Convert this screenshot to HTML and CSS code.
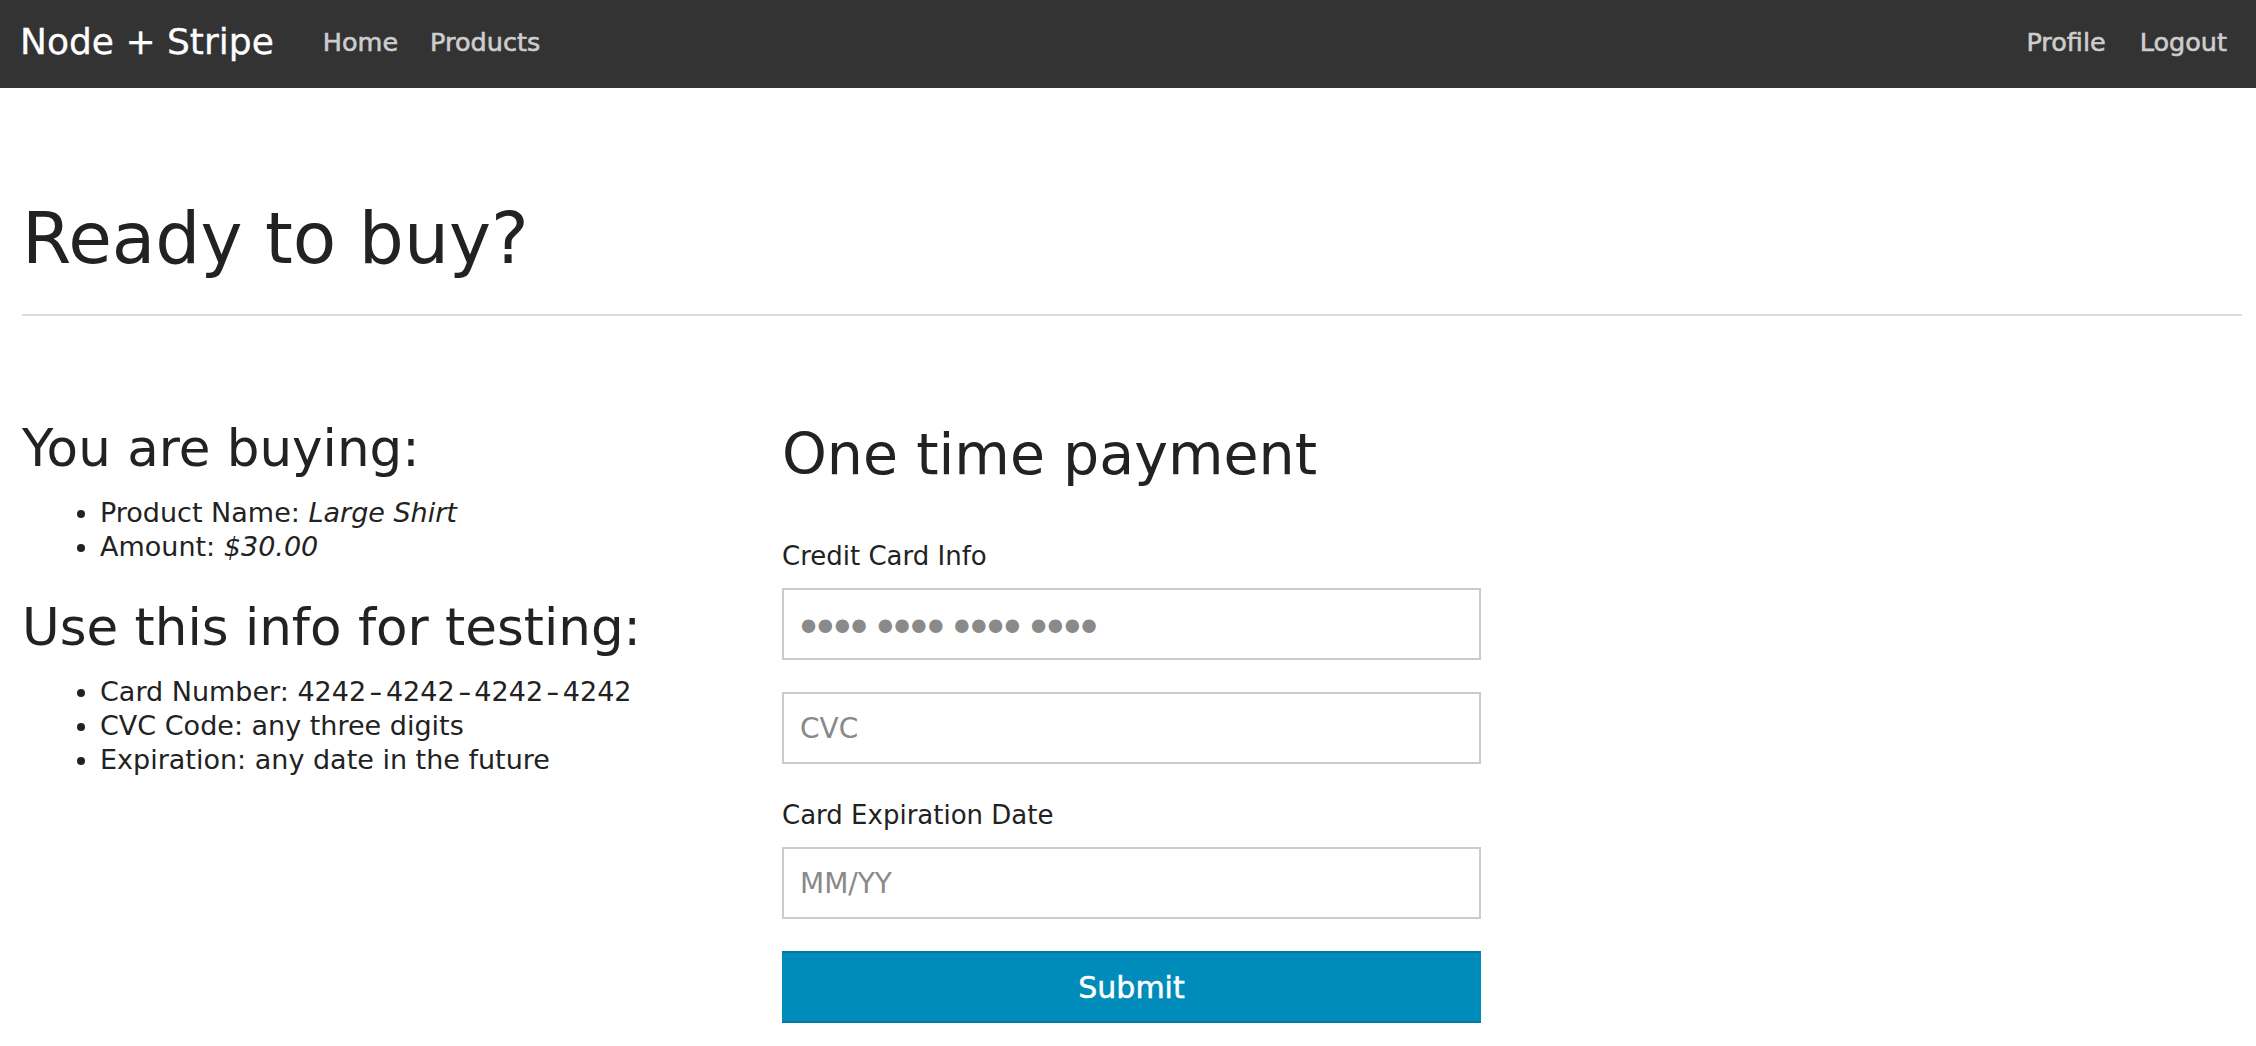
FILE: index.html
```html
<!DOCTYPE html>
<html lang="en">
<head>
<meta charset="utf-8">
<title>Node + Stripe</title>
<link rel="stylesheet" href="styles.css">
</head>
<body>
<header class="topbar">
  <a class="brand" href="#">Node + Stripe</a>
  <nav class="nav nav-left">
    <a href="#">Home</a>
    <a href="#">Products</a>
  </nav>
  <nav class="nav nav-right">
    <a href="#">Profile</a>
    <a href="#">Logout</a>
  </nav>
</header>
<main class="page">
  <h1 class="title">Ready to buy?</h1>
  <hr class="rule">
  <div class="row">
    <section class="info">
      <h3 class="info-head">You are buying:</h3>
      <ul class="info-list">
        <li>Product Name: <em>Large Shirt</em></li>
        <li>Amount: <em>$30.00</em></li>
      </ul>
      <h3 class="info-head info-head-2">Use this info for testing:</h3>
      <ul class="info-list">
        <li>Card Number: 4242<span class="dash">-</span>4242<span class="dash">-</span>4242<span class="dash">-</span>4242</li>
        <li>CVC Code: any three digits</li>
        <li>Expiration: any date in the future</li>
      </ul>
    </section>
    <section class="payment">
      <h2 class="pay-head">One time payment</h2>
      <form class="pay-form">
        <label class="field-label">Credit Card Info</label>
        <input class="field field-card" type="text" placeholder="•••• •••• •••• ••••">
        <input class="field" type="text" placeholder="CVC">
        <label class="field-label">Card Expiration Date</label>
        <input class="field" type="text" placeholder="MM/YY">
        <button class="submit" type="button">Submit</button>
      </form>
    </section>
  </div>
</main>
</body>
</html>
```
FILE: styles.css
```css
html, body {
  margin: 0;
  padding: 0;
  background: #fff;
}
body {
  font-family: "DejaVu Sans", "Liberation Sans", sans-serif;
  color: #222;
}

.topbar {
  display: flex;
  align-items: flex-start;
  height: 88px;
  box-sizing: border-box;
  padding: 0 12px 0 20px;
  background: #333;
}
.brand {
  font-size: 36px;
  line-height: 84px;
  color: #fff;
  text-decoration: none;
  margin-right: 33px;
  -webkit-text-stroke: 0.3px #fff;
}
.nav {
  display: flex;
}
.nav a {
  font-size: 25.5px;
  line-height: 84px;
  padding: 0 16px;
  color: #cdcdcd;
  text-decoration: none;
  -webkit-text-stroke: 0.6px #cdcdcd;
}
.nav-right {
  margin-left: auto;
}
.nav-right a {
  padding: 0 17px;
}

.page {
  padding: 0 14px 0 22px;
}
.title {
  margin: 109px 0 0;
  font-size: 71px;
  line-height: 84px;
  font-weight: normal;
  color: #222;
}
.rule {
  margin: 33px 0 0;
  border: 0;
  height: 2px;
  background: #dddddd;
}

.row {
  display: grid;
  grid-template-columns: 760px 699px;
  align-items: start;
  margin-top: 101px;
}

.info-head {
  margin: 0;
  font-size: 51.5px;
  line-height: 62px;
  font-weight: normal;
  color: #222;
}
.info-head-2 {
  margin-top: 32px;
}
.info-list {
  margin: 17px 0 0;
  padding-left: 78px;
  font-size: 27px;
  line-height: 34px;
}
.info-list em {
  font-style: italic;
}
.dash {
  display: inline-block;
  margin: 0 5px;
  transform: scaleX(1.35);
}

.pay-head {
  margin: 2px 0 47px;
  font-size: 57px;
  line-height: 71px;
  font-weight: normal;
  color: #222;
}
.pay-form {
  display: flex;
  flex-direction: column;
}
.field-label {
  display: block;
  font-size: 26px;
  line-height: 39px;
  margin-bottom: 12px;
  color: #222;
}
.field {
  display: block;
  width: 100%;
  height: 72px;
  box-sizing: border-box;
  margin: 0 0 32px;
  padding: 0 16px;
  border: 2px solid #cccccc;
  border-radius: 0;
  background: #fff;
  font-family: inherit;
  font-size: 28px;
  color: #222;
  outline: none;
}
.field::placeholder {
  color: #898989;
}
.field-card {
  padding: 20px 16px 0;
}
.field-card::placeholder {
  font-size: 46px;
  line-height: 33px;
  letter-spacing: -10.3px;
  word-spacing: 5px;
  text-indent: -5px;
  color: #8a8a8a;
}
.submit {
  display: block;
  width: 100%;
  height: 72px;
  margin: 0;
  border: 0;
  border-top: 2px solid #007aa3;
  border-bottom: 2px solid #007aa3;
  background: #008cba;
  color: #fff;
  font-family: inherit;
  font-size: 30px;
  -webkit-text-stroke: 0.5px #fff;
  cursor: pointer;
}
```
